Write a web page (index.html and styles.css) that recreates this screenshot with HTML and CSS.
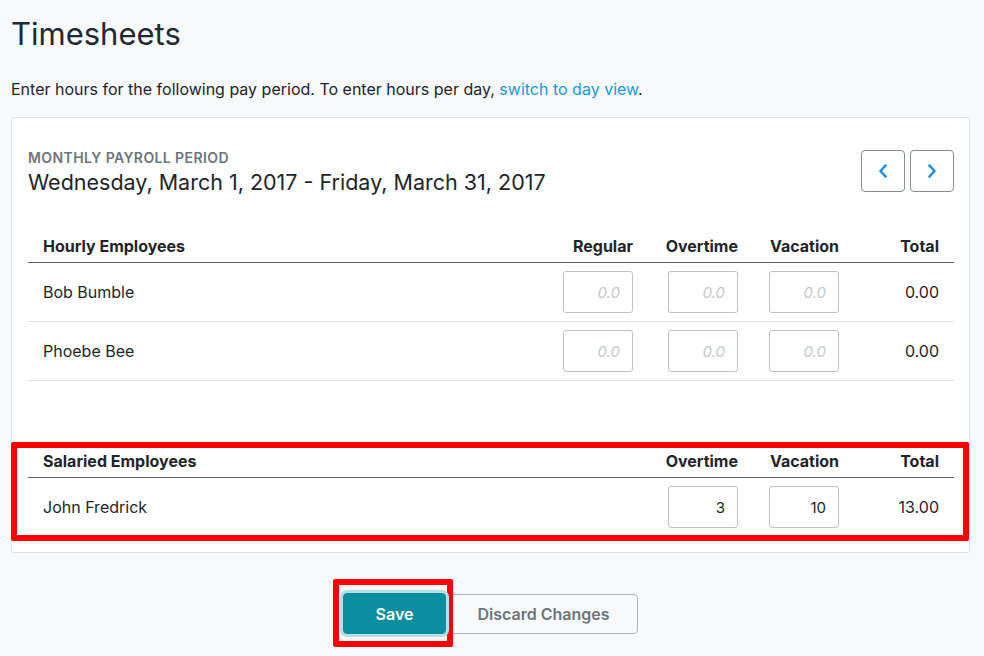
FILE: index.html
```html
<!DOCTYPE html>
<html lang="en">
<head>
<meta charset="utf-8">
<title>Timesheets</title>
<link rel="stylesheet" href="styles.css">
</head>
<body>
<div class="page">
  <h1 class="title">Timesheets</h1>
  <p class="intro">Enter hours for the following pay period. To enter hours per day, <a class="link" href="#">switch to day view</a>.</p>

  <section class="card">
    <div class="period">
      <div class="period-text">
        <div class="period-label">MONTHLY PAYROLL PERIOD</div>
        <div class="period-dates">Wednesday, March 1, 2017 - Friday, March 31, 2017</div>
      </div>
      <div class="nav">
        <button class="nav-btn" aria-label="Previous">
          <svg width="12" height="14" viewBox="0 0 12 14"><path d="M8.5 1.5 L3.5 7 L8.5 12.5" fill="none" stroke="#1b90d8" stroke-width="2.6" stroke-linecap="round" stroke-linejoin="round"/></svg>
        </button>
        <button class="nav-btn" aria-label="Next">
          <svg width="12" height="14" viewBox="0 0 12 14"><path d="M3.5 1.5 L8.5 7 L3.5 12.5" fill="none" stroke="#1b90d8" stroke-width="2.6" stroke-linecap="round" stroke-linejoin="round"/></svg>
        </button>
      </div>
    </div>

    <div class="table hourly">
      <div class="row head">
        <div class="cell name">Hourly Employees</div>
        <div class="cell num">Regular</div>
        <div class="cell num">Overtime</div>
        <div class="cell num">Vacation</div>
        <div class="cell num">Total</div>
      </div>
      <div class="row body">
        <div class="cell name">Bob Bumble</div>
        <div class="cell num"><input class="hours" placeholder="0.0"></div>
        <div class="cell num"><input class="hours" placeholder="0.0"></div>
        <div class="cell num"><input class="hours" placeholder="0.0"></div>
        <div class="cell num">0.00</div>
      </div>
      <div class="row body">
        <div class="cell name">Phoebe Bee</div>
        <div class="cell num"><input class="hours" placeholder="0.0"></div>
        <div class="cell num"><input class="hours" placeholder="0.0"></div>
        <div class="cell num"><input class="hours" placeholder="0.0"></div>
        <div class="cell num">0.00</div>
      </div>
    </div>

    <div class="table salaried highlight">
      <div class="row head">
        <div class="cell name">Salaried Employees</div>
        <div class="cell num">Overtime</div>
        <div class="cell num">Vacation</div>
        <div class="cell num">Total</div>
      </div>
      <div class="row body last">
        <div class="cell name">John Fredrick</div>
        <div class="cell num"><input class="hours" value="3"></div>
        <div class="cell num"><input class="hours" value="10"></div>
        <div class="cell num">13.00</div>
      </div>
    </div>
  </section>

  <div class="actions">
    <div class="save-wrap">
      <button class="btn btn-save">Save</button>
    </div>
    <button class="btn btn-discard">Discard Changes</button>
  </div>
</div>
</body>
</html>
```
FILE: styles.css
```css
* { box-sizing: border-box; }

html, body {
  background: #f8f9fa;
}

body {
  margin: 0;
  font-family: "Inter", "Noto Sans", sans-serif;
  color: #212529;
}

.page {
  padding: 14px 14px 40px 11px;
}

.title {
  margin: 0;
  font-size: 31px;
  line-height: 40px;
  font-weight: 400;
  color: #212932;
}

.intro {
  margin: 24px 0 17px;
  font-size: 16px;
  line-height: 22px;
  color: #212529;
}

.link {
  color: #1a9ad6;
  text-decoration: none;
}

.card {
  background: #fff;
  border: 1px solid #dee2e6;
  border-radius: 3px;
  padding: 32px 15px 16px 16px;
}

.period {
  display: flex;
  justify-content: space-between;
  align-items: flex-start;
}

.period-label {
  font-size: 14px;
  line-height: 16px;
  font-weight: 600;
  color: #6c757d;
  letter-spacing: 0.4px;
}

.period-dates {
  margin-top: 2px;
  font-size: 21.5px;
  line-height: 28px;
  color: #212529;
}

.nav {
  display: flex;
  gap: 5px;
}

.nav-btn {
  width: 44px;
  height: 42px;
  border: 1px solid #868e96;
  border-radius: 4px;
  background: #fff;
  display: flex;
  align-items: center;
  justify-content: center;
  padding: 0;
}

.table {
  display: flex;
  flex-direction: column;
}

.hourly {
  margin-top: 36px;
}

.hourly .row {
  display: grid;
  grid-template-columns: 1fr 100px 105px 101px 100px;
}

.salaried {
  margin-top: 66px;
}

.salaried .row {
  display: grid;
  grid-template-columns: 1fr 105px 101px 100px;
}

.row.head {
  height: 31px;
  padding: 4px 0 6px;
  border-bottom: 1px solid #5b6269;
  font-weight: 700;
  font-size: 16px;
  line-height: 20px;
}

.row.body {
  height: 59px;
  align-items: center;
  border-bottom: 1px solid #dee2e6;
  font-size: 16px;
}

.row.body.last {
  border-bottom: none;
  height: 58px;
}

.cell {
  padding: 0 15px;
}

.cell.num {
  text-align: right;
}

.hours {
  width: 70px;
  height: 42px;
  border: 1px solid #bcc2c8;
  border-radius: 3px;
  background: #fff;
  text-align: right;
  padding: 0 12px;
  font-family: "Inter", "Noto Sans", sans-serif;
  font-size: 15px;
  color: #212529;
}

.hours::placeholder {
  color: #c4c8cc;
  font-style: italic;
}

.highlight {
  position: relative;
}

.highlight::after {
  content: "";
  position: absolute;
  left: -17px;
  right: -15px;
  top: -5px;
  bottom: -5px;
  border: 6px solid #ff0000;
  border-radius: 2px;
  pointer-events: none;
}

.actions {
  display: flex;
  justify-content: center;
  align-items: flex-start;
  gap: 3px;
  margin-top: 40px;
}

.btn {
  height: 41px;
  border-radius: 4px;
  font-family: "Inter", "Noto Sans", sans-serif;
  font-size: 16px;
  font-weight: 600;
}

.save-wrap {
  position: relative;
  z-index: 1;
  display: flex;
  border: 6px solid #ff0000;
  border-radius: 2px;
  padding: 8px 1px 7px 4px;
  margin: -14px -7px -13px -10px;
}

.btn-save {
  width: 103px;
  background: #0b8fa0;
  color: #fff;
  border: 1px solid #0b8fa0;
  box-shadow: 0 0 0 3px #b4e0e5;
}

.btn-discard {
  width: 189px;
  margin-top: 1px;
  height: 40px;
  background: transparent;
  color: #6c757d;
  border: 1px solid #adb5bd;
}
```
